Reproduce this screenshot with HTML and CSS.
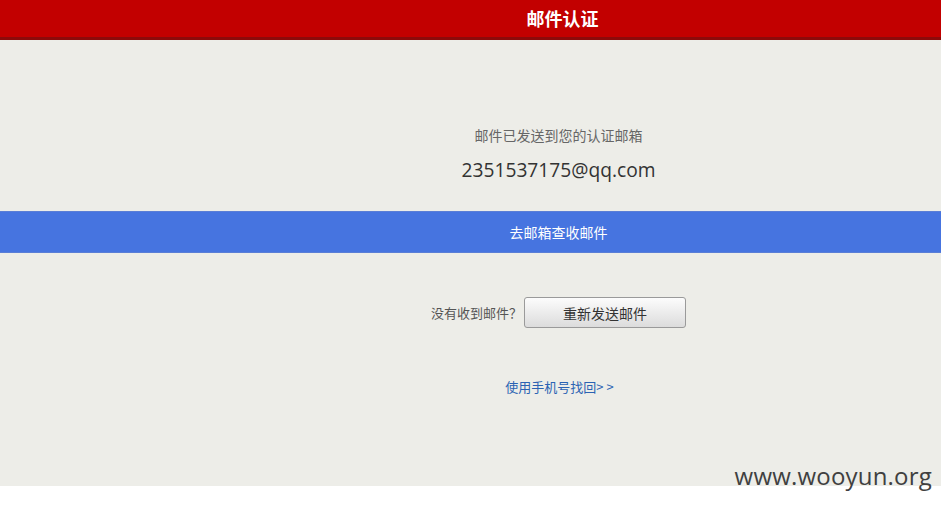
FILE: index.html
```html
<!DOCTYPE html>
<html lang="zh-CN">
<head>
    <meta charset="UTF-8">
    <title>邮件认证</title>
    <link rel="stylesheet" href="styles.css">
</head>
<body>
    <div class="header">
        <h1>邮件认证</h1>
    </div>
    <div class="main">
        <div class="sent-info">
            <p class="tip">邮件已发送到您的认证邮箱</p>
            <p class="email">2351537175@qq.com</p>
        </div>
        <div class="go-mail">
            <span>去邮箱查收邮件</span>
        </div>
        <div class="resend">
            <span class="resend-label">没有收到邮件<span class="qmark">？</span></span>
            <button class="btn">重新发送邮件</button>
        </div>
        <div class="other">
            <a href="#">使用手机号找回&gt; &gt;</a>
        </div>
    </div>
    <div class="watermark">www.wooyun.org</div>
</body>
</html>
```

FILE: styles.css
```css
body {
    margin: 0;
    padding: 0;
    background-color: #fff;
    font-family: "Noto Sans CJK SC", "Microsoft YaHei", sans-serif;
    position: relative;
    height: 506px;
}
.header {
    height: 37px;
    background-color: #c20000;
    border-bottom: 3px solid #8c0a0a;
    padding-left: 184px;
    text-align: center;
}
.header h1 {
    margin: 0;
    font-size: 18px;
    line-height: 37px;
    color: #fff;
    font-weight: bold;
}
.main {
    background-color: #edede8;
    height: 446px;
}
.sent-info {
    padding: 85px 0 0 176px;
    height: 171px;
    box-sizing: border-box;
    text-align: center;
}
.sent-info .tip {
    margin: 0;
    font-size: 14px;
    line-height: 20px;
    color: #666;
}
.sent-info .email {
    margin: 11px 0 0;
    font-family: "Open Sans", "Noto Sans", sans-serif;
    font-size: 19.2px;
    line-height: 28px;
    color: #333;
}
.go-mail {
    height: 42px;
    background-color: #4674e0;
    border-top: 1px solid #5a7ed6;
    border-bottom: 1px solid #5a7ed6;
    box-sizing: border-box;
    padding-left: 176px;
    text-align: center;
    line-height: 40px;
    font-size: 14px;
    color: #fff;
}
.resend {
    display: flex;
    justify-content: center;
    align-items: center;
    padding: 44px 0 0 176px;
}
.resend-label {
    font-size: 13px;
    color: #555;
    margin-right: 2px;
}
.qmark {
    display: inline-block;
    width: 13px;
    text-align: center;
}
.btn {
    width: 162px;
    height: 31px;
    border: 1px solid #9a9a9a;
    border-radius: 3px;
    background: linear-gradient(#fcfcfc, #dcdcdc);
    font-family: "Noto Sans CJK SC", sans-serif;
    font-size: 14px;
    color: #333;
    cursor: pointer;
}
.other {
    padding: 45px 0 0 178px;
    text-align: center;
}
.other a {
    font-size: 13px;
    color: #2b63b3;
    text-decoration: none;
}
.watermark {
    position: absolute;
    right: 9px;
    top: 459px;
    font-family: "Open Sans", "Noto Sans", sans-serif;
    font-size: 24px;
    color: #404040;
    letter-spacing: 0.2px;
}
```
